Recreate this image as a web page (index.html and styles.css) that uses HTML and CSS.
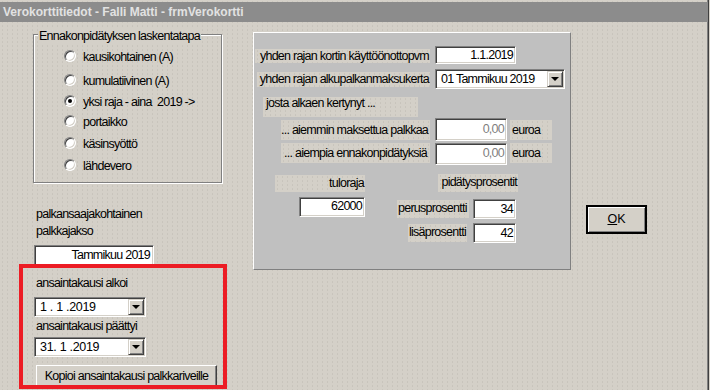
FILE: index.html
```html
<!DOCTYPE html>
<html>
<head>
<title>Verokorttitiedot</title>
<link rel="stylesheet" href="styles.css">
</head>
<body>

<div class="window">
    <div class="titlebar">Verokorttitiedot - Falli Matti - frmVerokortti</div>

    <div class="client">
        <!-- Left column: calculation method and earning period -->
        <div class="left">
            <div class="group">
                <span class="legend">Ennakonpidätyksen laskentatapa</span>
                <div class="radios">
                    <div class="opt"><span class="radio"></span><span class="opt-text">kausikohtainen (A)</span></div>
                    <div class="opt"><span class="radio"></span><span class="opt-text">kumulatiivinen (A)</span></div>
                    <div class="opt"><span class="radio checked"></span><span class="opt-text">yksi raja - aina &nbsp;2019 -&gt;</span></div>
                    <div class="opt"><span class="radio"></span><span class="opt-text">portaikko</span></div>
                    <div class="opt"><span class="radio"></span><span class="opt-text">käsinsyöttö</span></div>
                    <div class="opt"><span class="radio"></span><span class="opt-text">lähdevero</span></div>
                </div>
            </div>

            <div class="caption period-caption">palkansaajakohtainen<br>palkkajakso</div>
            <div class="field period">Tammikuu 2019</div>

            <div class="caption start-caption">ansaintakausi alkoi</div>
            <div class="field combo date-combo">
                <span class="combo-text">1 . 1 .2019</span>
                <span class="drop"></span>
            </div>

            <div class="caption end-caption">ansaintakausi päättyi</div>
            <div class="field combo date-combo end-combo">
                <span class="combo-text">31. 1 .2019</span>
                <span class="drop"></span>
            </div>

            <div class="btn copy-btn">Kopioi ansaintakausi palkkariveille</div>

            <div class="highlight"></div>
        </div>

        <!-- Single limit tax card panel -->
        <div class="panel">
            <div class="row row1">
                <div class="lbl-cell"><div class="lbl lbl-1">yhden rajan kortin käyttöönottopvm</div></div>
                <div class="field input input-date">1.1.2019</div>
            </div>
            <div class="row row2">
                <div class="lbl-cell"><div class="lbl lbl-2">yhden rajan alkupalkanmaksukerta</div></div>
                <div class="field combo pay-combo">
                    <span class="combo-text">01 Tammikuu 2019</span>
                    <span class="drop"></span>
                </div>
            </div>
            <div class="row row3">
                <div class="lbl lbl-3">josta alkaen kertynyt ...</div>
            </div>
            <div class="row row4">
                <div class="lbl-cell"><div class="lbl lbl-sum">... aiemmin maksettua palkkaa</div></div>
                <div class="field input input-sum">0,00</div>
                <div class="lbl lbl-unit">euroa</div>
            </div>
            <div class="row row5">
                <div class="lbl-cell"><div class="lbl lbl-sum">... aiempia ennakonpidätyksiä</div></div>
                <div class="field input input-sum">0,00</div>
                <div class="lbl lbl-unit">euroa</div>
            </div>

            <div class="limits">
                <div class="limit-col">
                    <div class="lbl lbl-limit">tuloraja</div>
                    <div class="field input input-limit">62000</div>
                </div>
                <div class="percent-col">
                    <div class="lbl lbl-percents">pidätysprosentit</div>
                    <div class="percent-row">
                        <div class="lbl lbl-base">perusprosentti</div>
                        <div class="field input input-pct">34</div>
                    </div>
                    <div class="percent-row extra-row">
                        <div class="lbl lbl-extra">lisäprosentti</div>
                        <div class="field input input-pct">42</div>
                    </div>
                </div>
            </div>
        </div>

        <div class="side">
            <div class="btn ok-btn"><u>O</u>K</div>
        </div>
    </div>
</div>

</body>
</html>
```

FILE: styles.css
```css
body {
    margin: 0;
    background: #d4d0c8;
    font-family: "Liberation Sans", Arial, sans-serif;
    font-size: 12.5px;
    letter-spacing: -0.75px;
    color: #000;
}

.window {
    width: 708px;
    height: 390px;
    overflow: hidden;
    border-right: 1px solid #404040;
    box-shadow: inset -1px 0 #808080;
    background-color: #d4d0c8;
    background-image: radial-gradient(#c8c4bc 0.6px, transparent 0.9px);
    background-size: 5px 4px;
}

.titlebar {
    margin-top: 2px;
    height: 20px;
    box-sizing: border-box;
    padding: 1px 0 0 3px;
    line-height: 19px;
    background: #8c8c8c;
    color: #e2e2e2;
    font-size: 12px;
    font-weight: bold;
    letter-spacing: 0;
}

.client {
    display: flex;
    align-items: flex-start;
}

/* ---------- left column ---------- */

.left {
    position: relative;
    width: 253px;
    height: 368px;
    flex-shrink: 0;
}

.group {
    position: relative;
    margin: 12px 0 0 33px;
    width: 189px;
    height: 149px;
    box-sizing: border-box;
    border: 1px solid #808080;
    box-shadow: inset 1px 1px #fff, 1px 1px #fff;
}

.legend {
    position: absolute;
    top: -6px;
    left: 4px;
    padding: 0 1px;
    line-height: 15px;
    white-space: nowrap;
    background: #d4d0c8;
}

.radios {
    display: grid;
    grid-template-rows: 24px 24px 18px 22px 22px 22px;
    padding: 9px 0 0 30px;
}

.opt {
    display: flex;
    align-items: center;
}

.opt-text {
    padding-top: 3px;
    line-height: 15px;
    white-space: nowrap;
}

.radio {
    position: relative;
    width: 12px;
    height: 12px;
    margin-right: 7px;
    box-sizing: border-box;
    border-radius: 50%;
    background: #fff;
    border: 1px solid;
    border-color: #808080 #fff #fff #808080;
    box-shadow: inset 1px 1px #404040, inset -1px -1px #d4d0c8;
    flex-shrink: 0;
}

.radio.checked::after {
    content: "";
    position: absolute;
    left: 3px;
    top: 3px;
    width: 4px;
    height: 4px;
    border-radius: 50%;
    background: #000;
}

.caption {
    margin-left: 36px;
    line-height: 17px;
    white-space: nowrap;
}

.period-caption {
    margin-top: 23px;
}

.start-caption {
    margin-top: 9px;
}

.end-caption {
    margin-top: 1px;
}

/* sunken edit box */
.field {
    box-sizing: border-box;
    background: #fff;
    border: 1px solid;
    border-color: #808080 #fff #fff #808080;
    box-shadow: inset 1px 1px #404040, inset -1px -1px #d4d0c8;
    white-space: nowrap;
}

.period {
    margin: 5px 0 0 34px;
    width: 120px;
    height: 21px;
    padding: 1px 3px 0 0;
    line-height: 16px;
    text-align: right;
}

.combo {
    display: flex;
    align-items: center;
    padding: 1px;
}

.combo-text {
    flex: 1;
    padding: 1px 0 0 4px;
    line-height: 15px;
}

.date-combo .combo-text {
    letter-spacing: -0.3px;
}

.drop {
    position: relative;
    width: 16px;
    height: 16px;
    box-sizing: border-box;
    background: #d4d0c8;
    border: 1px solid;
    border-color: #d4d0c8 #404040 #404040 #d4d0c8;
    box-shadow: inset 1px 1px #fff, inset -1px -1px #808080;
}

.drop::after {
    content: "";
    position: absolute;
    left: 3px;
    top: 5px;
    border-left: 4px solid transparent;
    border-right: 4px solid transparent;
    border-top: 4px solid #000;
}

.date-combo {
    margin: 5px 0 0 34px;
    width: 112px;
    height: 20px;
}

.end-combo {
    margin-top: 2px;
}

/* raised push button */
.btn {
    box-sizing: border-box;
    background: #d4d0c8;
    border: 1px solid;
    border-color: #fff #404040 #404040 #fff;
    box-shadow: inset -1px -1px #808080, inset 1px 1px #d4d0c8;
    text-align: center;
    white-space: nowrap;
}

.copy-btn {
    margin: 8px 0 0 36px;
    width: 181px;
    height: 22px;
    line-height: 20px;
}

.highlight {
    position: absolute;
    left: 19px;
    top: 242px;
    width: 208px;
    height: 125px;
    box-sizing: border-box;
    border: 4px solid #ec1c24;
}

/* ---------- panel ---------- */

.panel {
    margin-top: 10px;
    width: 318px;
    height: 238px;
    flex-shrink: 0;
    box-sizing: border-box;
    background: #c0c0c0;
    border: 1px solid;
    border-color: #fff #808080 #808080 #fff;
}

.row {
    display: flex;
    align-items: flex-start;
}

.lbl-cell {
    width: 176px;
    display: flex;
    justify-content: flex-end;
    flex-shrink: 0;
}

.lbl {
    box-sizing: border-box;
    background-color: #d4d0c8;
    background-image: radial-gradient(#c8c4bc 0.6px, transparent 0.9px);
    background-size: 5px 4px;
    white-space: nowrap;
    overflow: hidden;
}

.input {
    padding: 1px 2px 0 0;
    text-align: right;
}

.row1 {
    margin-top: 13px;
}

.lbl-1 {
    width: 175px;
    height: 14px;
    margin-top: 3px;
    padding-right: 1px;
    line-height: 14px;
    text-align: right;
}

.input-date {
    margin-left: 5px;
    width: 81px;
    height: 18px;
    line-height: 15px;
}

.row2 {
    margin-top: 5px;
}

.lbl-2 {
    width: 173px;
    height: 15px;
    margin-top: 3px;
    padding-right: 1px;
    line-height: 14px;
    text-align: right;
}

.pay-combo {
    margin-left: 5px;
    width: 130px;
    height: 20px;
}

.row3 {
    margin-top: 8px;
}

.lbl-3 {
    margin-left: 9px;
    width: 155px;
    height: 20px;
    padding-left: 3px;
    line-height: 13px;
}

.row4 {
    margin-top: 1px;
}

.lbl-sum {
    width: 149px;
    height: 20px;
    padding-right: 3px;
    line-height: 21px;
    text-align: right;
}

.row4 .lbl-sum,
.row4 .lbl-unit {
    margin-top: 2px;
}

.input-sum {
    margin-left: 5px;
    width: 72px;
    height: 23px;
    line-height: 20px;
    padding-top: 0;
    color: #808080;
}

.row5 {
    margin-top: 2px;
}

.row5 .input-sum {
    height: 22px;
    line-height: 19px;
}

.lbl-unit {
    margin-left: 3px;
    width: 42px;
    height: 20px;
    padding-left: 2px;
    line-height: 21px;
}

.limits {
    display: flex;
    align-items: flex-start;
    margin-top: 9px;
}

.limit-col {
    margin-left: 21px;
    width: 90px;
}

.lbl-limit {
    margin-top: 1px;
    height: 17px;
    padding-right: 1px;
    line-height: 16px;
    text-align: right;
}

.input-limit {
    margin: 5px 0 0 24px;
    width: 66px;
    height: 20px;
    line-height: 15px;
}

.percent-col {
    margin-left: 32px;
    width: 121px;
}

.lbl-percents {
    margin-left: 41px;
    width: 80px;
    height: 18px;
    padding-right: 1px;
    line-height: 16px;
    text-align: right;
}

.percent-row {
    display: flex;
    align-items: flex-start;
    margin-top: 7px;
}

.extra-row {
    margin-top: 4px;
}

.lbl-base {
    margin-top: 1px;
    width: 72px;
    height: 18px;
    padding-left: 1px;
    line-height: 17px;
}

.lbl-extra {
    margin: 1px 0 0 11px;
    width: 59px;
    height: 18px;
    padding-left: 1px;
    line-height: 17px;
}

.input-pct {
    margin-left: 4px;
    width: 43px;
    height: 20px;
    line-height: 17px;
}

.extra-row .input-pct {
    margin-left: 6px;
}

/* ---------- OK button ---------- */

.side {
    margin: 183px 0 0 15px;
}

.ok-btn {
    width: 61px;
    height: 29px;
    line-height: 25px;
    letter-spacing: 0;
    border-width: 2px;
    border-color: #000;
    box-shadow: inset 1px 1px #fff, inset -1px -1px #808080;
}
```
